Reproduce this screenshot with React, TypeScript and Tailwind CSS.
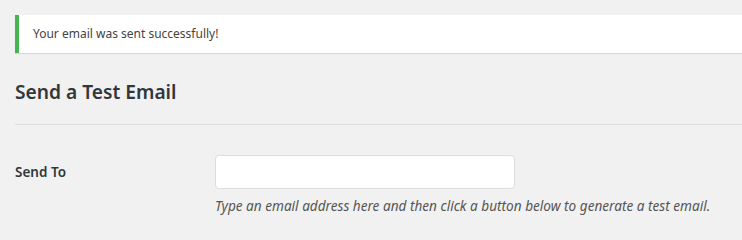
import React from 'react';

const font = { fontFamily: '"Noto Sans", "Open Sans", sans-serif' };

export default function App() {
    return (
        <div className="min-h-screen bg-[#f1f1f1] pl-[15px] pt-[15px] text-[#444]" style={font}>
            {/* Success notice */}
            <div className="flex h-[38px] items-center border-l-4 border-[#46b450] bg-white pl-[14px] shadow-[0_1px_1px_0_rgba(0,0,0,0.1)]">
                <p className="text-[12px] text-[#444]">Your email was sent successfully!</p>
            </div>

            <h2 className="mt-[26px] text-[19.2px] font-semibold leading-[26px] text-[#32373c]">Send a Test Email</h2>

            <div className="mt-[19px] h-px bg-[#dddddd]" />

            <div className="mt-[30px] flex">
                <label className="w-[200px] pt-[7px] text-[13.5px] font-semibold text-[#32373c]">Send To</label>
                <div className="flex flex-col">
                    <input
                        type="text"
                        className="h-[34px] w-[300px] rounded-[4px] border border-[#dddddd] bg-white px-2 outline-none"
                    />
                    <p className="mt-[7px] text-[13.6px] italic text-[#555]">
                        Type an email address here and then click a button below to generate a test email.
                    </p>
                </div>
            </div>
        </div>
    );
}
